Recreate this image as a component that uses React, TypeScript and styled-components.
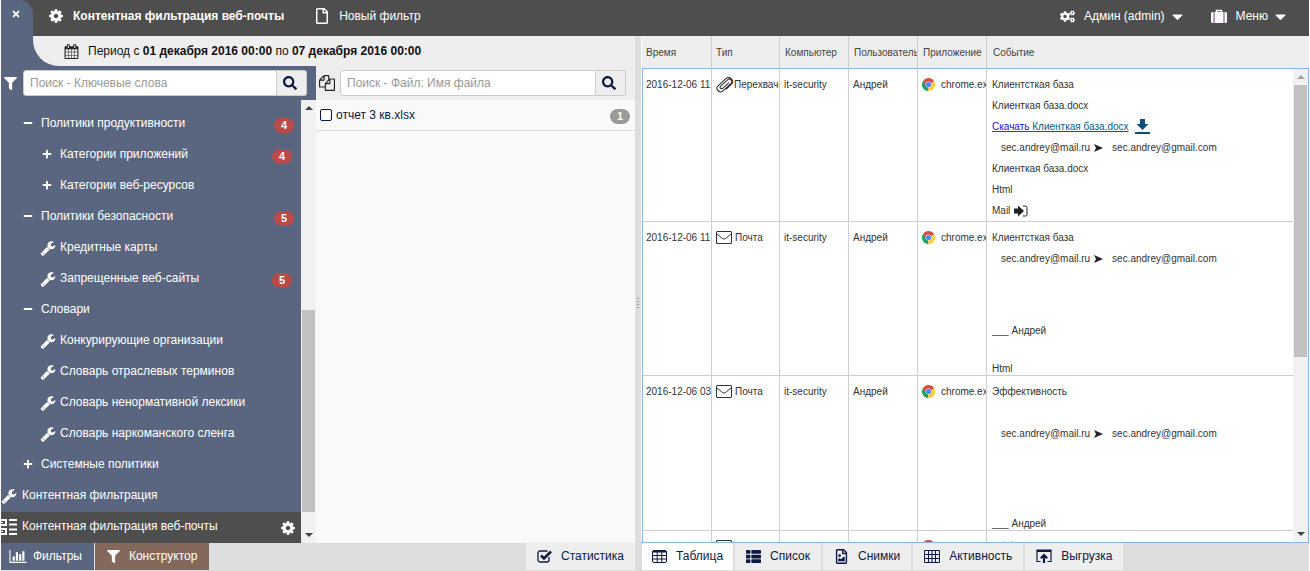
import React from "react";
import styled, { createGlobalStyle, css } from "styled-components";
import {
  FaCaretDown,
  FaCogs,
  FaFilter,
  FaMinus,
  FaPlus,
  FaRegFile,
  FaRegFileImage,
  FaSearch,
  FaThList,
  FaTimes,
} from "react-icons/fa";

const c = {
  slate: "#5a6680",
  dark: "#4e4e4e",
  panel: "#eeeeee",
  bar: "#dddddd",
  line: "#cfcfcf",
  frame: "#8db2ee",
  navy: "#0c1a45",
  ink: "#333333",
  red: "#b94a48",
};

const GlobalStyle = createGlobalStyle`
  * { box-sizing: border-box; }
  body {
    margin: 0;
    background: #fff;
    font-family: "Liberation Sans", Arial, sans-serif;
    font-size: 12px;
    color: #111;
  }
  button, input { font: inherit; color: inherit; }
  svg { display: block; flex: none; }
`;

const Page = styled.div`
  display: flex;
  flex-direction: column;
  height: 100vh;
  padding: 0 1px;
  overflow: hidden;
`;

/* ---------- top bar ---------- */

const TopBar = styled.header`
  flex: none;
  display: flex;
  align-items: center;
  height: 36px;
  background: ${c.dark};
  color: #fff;
`;

const PlainButton = styled.button`
  display: flex;
  align-items: center;
  padding: 0;
  border: 0;
  background: none;
  cursor: pointer;
  white-space: nowrap;
`;

const CloseButton = styled(PlainButton)`
  align-self: stretch;
  justify-content: center;
  width: 32px;
  padding: 0 2px 8px 0;
  margin-right: 15px;
  background: ${c.slate};
  border-radius: 0 14px 0 0;
`;

const TopButton = styled(PlainButton)<{ $strong?: boolean }>`
  gap: 9px;
  padding-bottom: 4px;
  font-weight: ${(p) => (p.$strong ? "bold" : "normal")};
`;

const TopStart = styled.nav`
  display: flex;
  gap: 30px;
  flex: 1;
`;

const TopEnd = styled.nav`
  display: flex;
  gap: 25px;
  padding-right: 20px;
`;

const MenuLabel = styled.span`
  display: flex;
  align-items: center;
  gap: 4px;
`;

/* ---------- page columns ---------- */

const columns = css`
  display: grid;
  grid-template-columns: minmax(0, 634fr) 6px minmax(0, 668fr);
`;

const Main = styled.main`
  ${columns}
  flex: 1;
  min-height: 0;
`;

const Left = styled.div`
  display: flex;
  flex-direction: column;
  min-height: 0;
`;

const PeriodWrap = styled.div`
  flex: none;
  padding-left: 32px;
  background: linear-gradient(to right, ${c.slate} 315px, ${c.panel} 315px);
`;

const Period = styled.div`
  display: flex;
  align-items: center;
  gap: 9px;
  height: 30px;
  padding-left: 31px;
  background: ${c.panel};
  border-radius: 0 0 0 26px;
  white-space: nowrap;
`;

const LeftBody = styled.div`
  flex: 1;
  display: flex;
  min-height: 0;
`;

const Sidebar = styled.aside`
  flex: none;
  display: flex;
  flex-direction: column;
  width: 315px;
  background: ${c.slate};
  color: #fff;
`;

const Files = styled.section`
  flex: 1;
  min-width: 0;
  display: flex;
  flex-direction: column;
  background: #f9f9f9;
`;

const SearchRow = styled.form<{ $light?: boolean }>`
  flex: none;
  display: flex;
  align-items: center;
  height: 34px;
  padding: 0 9px 0 3px;
  gap: ${(p) => (p.$light ? 5 : 6)}px;
  background: ${(p) => (p.$light ? c.panel : c.slate)};
  color: ${(p) => (p.$light ? "#222" : "#fff")};
`;

const SearchInput = styled.input`
  flex: 1;
  min-width: 0;
  height: 26px;
  padding: 0 6px;
  border: 1px solid #ccc;
  border-radius: 3px 0 0 3px;
  background: #fff;
  color: #222;
  outline: 0;
  &::placeholder { color: #999; opacity: 1; }
`;

const SearchButton = styled(PlainButton)`
  justify-content: center;
  width: 30px;
  height: 26px;
  padding-right: 4px;
  border: 1px solid #ccc;
  border-left: 0;
  border-radius: 0 3px 3px 0;
  background: ${c.panel};
  color: ${c.navy};
`;

const InputGroup = styled.div`
  flex: 1;
  min-width: 0;
  display: flex;
`;

/* ---------- tree ---------- */

const TreeArea = styled.div`
  flex: 1;
  display: flex;
  min-height: 0;
`;

const Tree = styled.ul`
  flex: 1;
  min-width: 0;
  margin: 0;
  padding: 9px 0 0;
  list-style: none;
  overflow: hidden;
`;

const TreeRow = styled.li<{ $level: number; $active?: boolean }>`
  display: flex;
  align-items: center;
  height: 31px;
  padding: 0 ${(p) => [5, 7, 9][p.$level]}px 4px ${(p) => [0, 20, 39][p.$level]}px;
  background: ${(p) => (p.$active ? c.dark : "none")};
`;

const TreeIcon = styled.span<{ $level: number }>`
  flex: none;
  display: flex;
  width: ${(p) => (p.$level === 0 ? 21 : 20)}px;
`;

const TreeLabel = styled.span`
  flex: 1;
  white-space: nowrap;
`;

const Count = styled.span<{ $grey?: boolean }>`
  flex: none;
  min-width: 20px;
  padding: 0 7px;
  border-radius: 8px;
  background: ${(p) => (p.$grey ? "#999" : c.red)};
  color: #fff;
  font-size: 11px;
  font-weight: bold;
  line-height: 15px;
  text-align: center;
  margin-top: ${(p) => (p.$grey ? 2 : 5)}px;
`;

const RowAction = styled.span`
  margin-top: 5px;
`;

/* ---------- scroll rail ---------- */

const RailBox = styled.div`
  flex: none;
  display: flex;
  flex-direction: column;
  align-items: center;
  width: 15px;
  background: #f1f1f1;
`;

const RailArrow = styled.span<{ $down?: boolean; $muted?: boolean }>`
  flex: none;
  display: flex;
  align-items: center;
  justify-content: center;
  width: 14px;
  height: 16px;
  color: ${(p) => (p.$muted ? "#a3a3a3" : "#444")};
  transform: ${(p) => (p.$down ? "rotate(180deg)" : "none")};
`;

const RailSpace = styled.span<{ $grow: number }>`
  flex: ${(p) => p.$grow} 0 0;
`;

const RailThumb = styled.span<{ $grow: number }>`
  flex: ${(p) => p.$grow} 0 0;
  width: 13px;
  background: #c1c1c1;
`;

function Rail({ before, thumb, after, muted }: { before: number; thumb: number; after: number; muted?: boolean }) {
  const arrow = (
    <svg width="8" height="4" viewBox="0 0 8 4" fill="currentColor"><path d="M0 4L4 0l4 4z" /></svg>
  );
  return (
    <RailBox aria-hidden="true">
      <RailArrow $muted={muted}>{arrow}</RailArrow>
      <RailSpace $grow={before} />
      <RailThumb $grow={thumb} />
      <RailSpace $grow={after} />
      <RailArrow $down>{arrow}</RailArrow>
    </RailBox>
  );
}

/* ---------- file list ---------- */

const FileRow = styled.div`
  display: flex;
  align-items: center;
  height: 31px;
  padding: 0 5px 0 4px;
  border-bottom: 1px solid #ddd;
`;

const FileLabel = styled.label`
  flex: 1;
  display: flex;
  align-items: center;
  gap: 4px;
  color: ${c.navy};
`;

const Check = styled.input`
  appearance: none;
  width: 12px;
  height: 12px;
  margin: 0;
  border: 1px solid ${c.navy};
  border-radius: 2px;
  background: #fff;
`;

const Splitter = styled.div`
  display: flex;
  align-items: center;
  justify-content: center;
  padding-top: 28px;
  background: ${c.bar};
  &::before {
    content: "";
    width: 2px;
    height: 12px;
    background: repeating-linear-gradient(#999 0 1px, transparent 1px 3px);
  }
`;

/* ---------- event table ---------- */

const Events = styled.section`
  display: flex;
  min-height: 0;
  padding-left: 1px;
  border-bottom: 1px solid ${c.frame};
`;

const TableView = styled.div`
  flex: 1;
  min-width: 0;
  overflow: hidden;
`;

const Table = styled.table`
  width: 100%;
  table-layout: fixed;
  border-collapse: separate;
  border-spacing: 0;
  font-size: 10px;
  color: ${c.ink};
`;

const Th = styled.th`
  height: 33px;
  padding: 0 0 0 4px;
  overflow: hidden;
  border-right: 1px solid ${c.line};
  border-bottom: 1px solid ${c.frame};
  background: ${c.panel};
  color: #444;
  font-weight: normal;
  text-align: left;
  white-space: nowrap;
  &:nth-child(n + 3) { padding-left: 5px; }
  &:last-child { border-right: 0; padding-left: 6px; }
`;

const Td = styled.td`
  padding: 5px 0 0 4px;
  overflow: hidden;
  border-right: 1px solid ${c.line};
  border-bottom: 1px solid ${c.line};
  vertical-align: top;
  white-space: nowrap;
  &:first-child { border-left: 1px solid ${c.frame}; padding-left: 3px; }
  &:last-child { border-right: 0; padding-left: 5px; }
`;

const CellLine = styled.div<{ $gap?: number }>`
  display: flex;
  align-items: center;
  gap: ${(p) => p.$gap ?? 0}px;
  height: 21px;
  overflow: hidden;
`;

const EventLine = styled.div<{ $before?: number; $tight?: boolean; $indent?: boolean }>`
  display: flex;
  align-items: center;
  gap: 4px;
  height: ${(p) => (p.$tight ? 14 : 21)}px;
  margin-top: ${(p) => p.$before ?? 0}px;
  padding-left: ${(p) => (p.$indent ? 9 : 0)}px;
`;

const Recipient = styled.span`
  margin-left: 5px;
`;

const Download = styled.a`
  display: flex;
  align-items: center;
  gap: 6px;
  color: #0b5a82;
  text-decoration: underline;
`;

const DownloadVerb = styled.span`
  color: #1414e6;
`;

const RailColumn = styled.div`
  flex: none;
  display: flex;
  flex-direction: column;
  width: 16px;
`;

const RailHead = styled.div`
  flex: none;
  height: 33px;
  background: ${c.panel};
  border-bottom: 1px solid ${c.frame};
`;

const RailFrame = styled.div`
  flex: 1;
  display: flex;
  border-right: 1px solid ${c.frame};
`;

/* ---------- bottom bar ---------- */

const BottomBar = styled.footer`
  ${columns}
  flex: none;
  height: 28px;
  background: ${c.bar};
`;

const TabStrip = styled.nav<{ $gap: number }>`
  display: flex;
  gap: ${(p) => p.$gap}px;
  padding-bottom: 1px;
`;

const RightTabs = styled(TabStrip)`
  grid-column: 3;
  padding-left: 1px;
`;

const TabSpacer = styled.span`
  flex: 1;
`;

const tabLook = {
  light: css`padding: 0 11px 1px; background: ${c.panel}; color: ${c.navy};`,
  current: css`padding: 0 10px 1px; background: #fff; color: ${c.navy};`,
  slate: css`gap: 6px; padding: 0 12px 1px 8px; background: ${c.slate}; color: #fff;`,
  brown: css`padding: 0 12px 1px; background: #84685c; color: #fff;`,
};

const Tab = styled(PlainButton)<{ $look: keyof typeof tabLook }>`
  gap: 9px;
  ${(p) => tabLook[p.$look]}
`;

/* ---------- drawings ---------- */

const GearIcon = () => (
  <svg width="16" height="16" viewBox="0 0 1792 1792" fill="#fff">
    <path d="M1152 896q0-106-75-181t-181-75-181 75-75 181 75 181 181 75 181-75 75-181zm512-109v222q0 12-8 23t-20 13l-185 28q-19 54-39 91 35 50 107 138 10 12 10 25t-9 23q-27 37-99 108t-94 71q-12 0-26-9l-138-108q-44 23-91 38-16 136-29 186-7 28-36 28h-222q-14 0-24.5-8.5t-11.5-21.5l-28-184q-49-16-90-37l-141 107q-10 9-25 9-14 0-25-11-126-114-165-168-7-10-7-23 0-12 8-23 15-21 51-66.5t54-70.5q-27-50-41-99l-183-27q-13-2-21-12.5t-8-23.5v-222q0-12 8-23t19-13l186-28q14-46 39-92-40-57-107-138-10-12-10-24 0-10 9-23 26-36 98.5-107.5t94.5-71.5q13 0 26 10l138 107q44-23 91-38 16-136 29-186 7-28 36-28h222q14 0 24.5 8.5t11.5 21.5l28 184q49 16 90 37l142-107q9-9 24-9 13 0 25 10 129 119 165 170 7 8 7 22 0 12-8 23-15 21-51 66.5t-54 70.5q26 50 41 98l183 28q13 2 21 12.5t8 23.5z" />
  </svg>
);

const WrenchIcon = () => (
  <svg width="16" height="16" viewBox="0 0 1792 1792" fill="#fff">
    <path d="M448 1472q0-26-19-45t-45-19-45 19-19 45 19 45 45 19 45-19 19-45zm644-420l-682 682q-37 37-90 37-52 0-91-37l-106-108q-38-36-38-90 0-53 38-91l681-681q39 98 114.5 173.5t173.5 114.5zm634-435q0 39-23 106-47 134-164.5 217.5t-258.5 83.5q-185 0-316.5-131.5t-131.5-316.5 131.5-316.5 316.5-131.5q58 0 121.5 16.5t107.5 46.5q16 11 16 28t-16 28l-293 169v224l193 107q5-3 79-48.5t135.5-81 70.5-35.5q15 0 23.5 10t8.5 25z" />
  </svg>
);

const CalendarIcon = () => (
  <svg width="15" height="15" viewBox="0 0 1792 1792" fill="#222">
    <path d="M192 1664h288v-288h-288v288zm352 0h320v-288h-320v288zm-352-352h288v-320h-288v320zm352 0h320v-320h-320v320zm-352-384h288v-288h-288v288zm736 736h320v-288h-320v288zm-384-736h320v-288h-320v288zm768 736h288v-288h-288v288zm-384-352h320v-320h-320v320zm-352-864v-288q0-13-9.5-22.5t-22.5-9.5h-64q-13 0-22.5 9.5t-9.5 22.5v288q0 13 9.5 22.5t22.5 9.5h64q13 0 22.5-9.5t9.5-22.5zm736 864h288v-320h-288v320zm-384-384h320v-288h-320v288zm384 0h288v-288h-288v288zm32-480v-288q0-13-9.5-22.5t-22.5-9.5h-64q-13 0-22.5 9.5t-9.5 22.5v288q0 13 9.5 22.5t22.5 9.5h64q13 0 22.5-9.5t9.5-22.5zm384-64v1280q0 52-38 90t-90 38h-1408q-52 0-90-38t-38-90v-1280q0-52 38-90t90-38h128v-96q0-66 47-113t113-47h64q66 0 113 47t47 113v96h384v-96q0-66 47-113t113-47h64q66 0 113 47t47 113v96h128q52 0 90 38t38 90z" />
  </svg>
);

const CopyIcon = () => (
  <svg width="16" height="16" viewBox="0 0 1792 1792" fill="#222">
    <path d="M1696 384q40 0 68 28t28 68v1216q0 40-28 68t-68 28h-960q-40 0-68-28t-28-68v-288h-544q-40 0-68-28t-28-68v-672q0-40 20-88t48-76l408-408q28-28 76-48t88-20h416q40 0 68 28t28 68v328q68-40 128-40h416zm-544 213l-299 299h299v-299zm-640-384l-299 299h299v-299zm196 647l316-316v-416h-384v416q0 40-28 68t-68 28h-416v640h512v-256q0-40 20-88t48-76zm956 804v-1152h-384v416q0 40-28 68t-68 28h-416v640h896z" />
  </svg>
);

const ChartIcon = () => (
  <svg width="18" height="15" viewBox="0 0 2048 1792" fill="currentColor">
    <path d="M640 896v512h-256v-512h256zm384-512v1024h-256v-1024h256zm1024 1152v128h-2048v-1536h128v1408h1920zm-640-896v768h-256v-768h256zm384-384v1152h-256v-1152h256z" />
  </svg>
);

const SuitcaseIcon = () => (
  <svg width="16" height="15" viewBox="0 0 16 15">
    <path d="M5.5 3V1.5h5V3" fill="none" stroke="#fff" strokeWidth="1.5" />
    <rect y="3" width="16" height="11" rx="1.5" fill="#fff" />
    <path d="M3 3v11M13 3v11" stroke="#8b5f96" strokeWidth="1.2" />
  </svg>
);

const ViewIcon = () => (
  <svg width="16" height="16" viewBox="0 0 16 16">
    <path d="M0 1h5v5H0M0 10h5v5H0" fill="none" stroke="#fff" strokeWidth="2" />
    <path d="M0 3.5h2M0 12.5h2" stroke="#fff" />
    <path d="M8 1h8M8 5.5h8M8 10.5h8M8 15h8" stroke="#fff" strokeWidth="2" />
  </svg>
);

const CheckSquareIcon = () => (
  <svg width="15" height="14" viewBox="0 0 15 14" fill="none" stroke="currentColor">
    <path d="M12 8v3a2 2 0 0 1-2 2H3a2 2 0 0 1-2-2V4a2 2 0 0 1 2-2h7.5" strokeWidth="1.3" />
    <path d="M4 6.5L7 9.5 14 2.5" strokeWidth="2.6" />
  </svg>
);

const TableIcon = () => (
  <svg width="15" height="13" viewBox="0 0 15 13" fill="none" stroke="currentColor">
    <rect x=".5" y=".5" width="14" height="12" rx="1.5" />
    <path d="M1 1.5h13" strokeWidth="2" />
    <path d="M0 5.5h15M0 9h15M5.2 2v10.5M9.8 2v10.5" />
  </svg>
);

const GridIcon = () => (
  <svg width="16" height="13" viewBox="0 0 16 13" fill="none" stroke="currentColor">
    <path d="M.5.5h15v12H.5zM0 4.5h16M0 8.5h16M4.500 0v13M8 0v13M11.500 0v13" />
  </svg>
);

const ExportIcon = () => (
  <svg width="16" height="14" viewBox="0 0 16 14" fill="none" stroke="currentColor">
    <path d="M4.5 12.5H1V1h14v11.5h-3.5" strokeWidth="1.2" />
    <path d="M1 2h14" strokeWidth="2" />
    <path d="M8 14V7M4.8 9.2L8 6l3.2 3.2" strokeWidth="2.2" />
  </svg>
);

const ClipIcon = () => (
  <svg width="18" height="18" viewBox="0 0 18 18" fill="none" stroke="#333" strokeWidth="1.1">
    <path d="M12.9 6.6L6.7 12.3a1.5 1.5 0 0 1-2.1-2.2l6.9-6.3a2.5 2.5 0 0 1 3.5 3.6l-8 7.4a3.5 3.5 0 0 1-4.9-5l7.7-7.1a4 4 0 0 1 5.600.1 4 4 0 0 1 .1 5.300l-5.500 5.300" />
  </svg>
);

const MailIcon = () => (
  <svg width="16" height="13" viewBox="0 0 16 13" fill="none" stroke="#333">
    <rect x=".5" y=".5" width="15" height="12" rx=".5" />
    <path d="M1 3l5.5 4.6q1.5 1 3 0L15 3" />
  </svg>
);

const ChromeIcon = () => (
  <svg width="13" height="13" viewBox="0 0 26 26">
    <path d="M13 13L1.7 6.5A13 13 0 0 1 24.3 6.5z" fill="#dd4b3e" />
    <path d="M13 13L1.7 6.5A13 13 0 0 0 13 26z" fill="#1da362" />
    <path d="M13 13L24.3 6.5A13 13 0 0 1 13 26z" fill="#fdcd3f" />
    <path d="M13 13V6.5h11.3zM7.4 16.3L1.7 6.5 10 11z" fill="#dd4b3e" />
    <path d="M18.6 16.3L13 26l-1-8z" fill="#fdcd3f" />
    <circle cx="13" cy="13" r="6" fill="#e8effc" />
    <circle cx="13" cy="13" r="5.2" fill="#4a8af4" />
  </svg>
);

const DownloadIcon = () => (
  <svg width="15" height="15" viewBox="0 0 15 15" fill="#0b4f78">
    <path d="M5 0h5v5h3.5l-6 6-6-6H5zM0 13h15v2H0z" />
  </svg>
);

const SignInIcon = () => (
  <svg width="14" height="12" viewBox="0 0 14 12">
    <path d="M0 3.5h4v-3L10 6l-6 5.5v-3H0z" fill="#222" />
    <path d="M9 1h2.5a1.5 1.5 0 0 1 1.5 1.5v7a1.5 1.5 0 0 1-1.5 1.5H9" fill="none" stroke="#222" />
  </svg>
);

const ArrowIcon = () => (
  <svg width="9" height="8" viewBox="0 0 9 8" fill="#222">
    <path d="M0 0l9 4-9 4 2-4z" />
  </svg>
);

/* ---------- data ---------- */

type Node = { label: string; level: number; kind: "plus" | "minus" | "wrench" | "view"; count?: number };

const nodes: Node[] = [
  { label: "Политики продуктивности", level: 1, kind: "minus", count: 4 },
  { label: "Категории приложений", level: 2, kind: "plus", count: 4 },
  { label: "Категории веб-ресурсов", level: 2, kind: "plus" },
  { label: "Политики безопасности", level: 1, kind: "minus", count: 5 },
  { label: "Кредитные карты", level: 2, kind: "wrench" },
  { label: "Запрещенные веб-сайты", level: 2, kind: "wrench", count: 5 },
  { label: "Словари", level: 1, kind: "minus" },
  { label: "Конкурирующие организации", level: 2, kind: "wrench" },
  { label: "Словарь отраслевых терминов", level: 2, kind: "wrench" },
  { label: "Словарь ненормативной лексики", level: 2, kind: "wrench" },
  { label: "Словарь наркоманского сленга", level: 2, kind: "wrench" },
  { label: "Системные политики", level: 1, kind: "plus" },
  { label: "Контентная фильтрация", level: 0, kind: "wrench" },
  { label: "Контентная фильтрация веб-почты", level: 0, kind: "view" },
];

const SignIcon = styled.span`
  display: flex;
  padding: 1px 0 0 2px;
`;

const WrenchBox = styled.span`
  padding-top: 3px;
`;

const nodeIcon = {
  plus: <SignIcon><FaPlus size={10} /></SignIcon>,
  minus: <SignIcon><FaMinus size={10} /></SignIcon>,
  wrench: <WrenchBox><WrenchIcon /></WrenchBox>,
  view: <WrenchBox><ViewIcon /></WrenchBox>,
};

const Route = ({ before }: { before?: number }) => (
  <EventLine $indent $before={before}>
    sec.andrey@mail.ru <ArrowIcon /> <Recipient>sec.andrey@gmail.com</Recipient>
  </EventLine>
);

const events = [
  {
    time: "2016-12-06 11:48",
    clip: true,
    body: (
      <>
        <EventLine>Клиентсткая база</EventLine>
        <EventLine>Клиенткая база.docx</EventLine>
        <EventLine>
          <Download href="#download">
            <span><DownloadVerb>Скачать </DownloadVerb>Клиенткая база.docx</span>
            <DownloadIcon />
          </Download>
        </EventLine>
        <Route />
        <EventLine>Клиенткая база.docx</EventLine>
        <EventLine>Html</EventLine>
        <EventLine>Mail <SignInIcon /></EventLine>
      </>
    ),
  },
  {
    time: "2016-12-06 11:46",
    body: (
      <>
        <EventLine>Клиентсткая база</EventLine>
        <Route />
        <EventLine $before={51}>___ Андрей</EventLine>
        <EventLine $before={20} $tight>Html</EventLine>
      </>
    ),
  },
  {
    time: "2016-12-06 03:12",
    body: (
      <>
        <EventLine>Эффективность</EventLine>
        <Route before={21} />
        <EventLine $before={72} $tight>___ Андрей</EventLine>
      </>
    ),
  },
  { time: "2016-12-06 03:10", body: <EventLine>Эффективность</EventLine> },
];

export default function App() {
  return (
    <Page>
      <GlobalStyle />
      <TopBar>
        <CloseButton type="button" aria-label="Закрыть"><FaTimes size={10} /></CloseButton>
        <TopStart>
          <TopButton type="button" $strong><GearIcon />Контентная фильтрация веб-почты</TopButton>
          <TopButton type="button"><FaRegFile size={16} />Новый фильтр</TopButton>
        </TopStart>
        <TopEnd>
          <TopButton type="button">
            <FaCogs size={15} />
            <MenuLabel>Админ (admin)<FaCaretDown size={17} /></MenuLabel>
          </TopButton>
          <TopButton type="button">
            <SuitcaseIcon />
            <MenuLabel>Меню<FaCaretDown size={17} /></MenuLabel>
          </TopButton>
        </TopEnd>
      </TopBar>

      <Main>
        <Left>
          <PeriodWrap>
            <Period>
              <CalendarIcon />
              <span>Период с <b>01 декабря 2016 00:00</b> по <b>07 декабря 2016 00:00</b></span>
            </Period>
          </PeriodWrap>
          <LeftBody>
            <Sidebar>
              <SearchRow onSubmit={(e) => e.preventDefault()}>
                <FaFilter size={13} />
                <InputGroup>
                  <SearchInput aria-label="Ключевые слова" placeholder="Поиск - Ключевые слова" />
                  <SearchButton type="submit" aria-label="Найти"><FaSearch size={14} /></SearchButton>
                </InputGroup>
              </SearchRow>
              <TreeArea>
                <Tree>
                  {nodes.map((n) => (
                    <TreeRow key={n.label} $level={n.level} $active={n.kind === "view"}>
                      <TreeIcon $level={n.level}>{nodeIcon[n.kind]}</TreeIcon>
                      <TreeLabel>{n.label}</TreeLabel>
                      {n.count && <Count>{n.count}</Count>}
                      {n.kind === "view" && <RowAction><GearIcon /></RowAction>}
                    </TreeRow>
                  ))}
                </Tree>
                <Rail before={194} thumb={202} after={15} />
              </TreeArea>
            </Sidebar>
            <Files>
              <SearchRow $light onSubmit={(e) => e.preventDefault()}>
                <CopyIcon />
                <InputGroup>
                  <SearchInput aria-label="Имя файла" placeholder="Поиск - Файл: Имя файла" />
                  <SearchButton type="submit" aria-label="Найти"><FaSearch size={14} /></SearchButton>
                </InputGroup>
              </SearchRow>
              <FileRow>
                <FileLabel><Check type="checkbox" />отчет 3 кв.xlsx</FileLabel>
                <Count $grey>1</Count>
              </FileRow>
            </Files>
          </LeftBody>
        </Left>

        <Splitter />

        <Events>
          <TableView>
            <Table>
              <colgroup>
                <col width="70" />
                <col width="68" />
                <col width="69" />
                <col width="69" />
                <col width="69" />
                <col />
              </colgroup>
              <thead>
                <tr>
                  <Th>Время</Th>
                  <Th>Тип</Th>
                  <Th>Компьютер</Th>
                  <Th>Пользователь</Th>
                  <Th>Приложение</Th>
                  <Th>Событие</Th>
                </tr>
              </thead>
              <tbody>
                {events.map((e) => (
                  <tr key={e.time}>
                    <Td><CellLine>{e.time}</CellLine></Td>
                    <Td>
                      {e.clip
                        ? <CellLine><ClipIcon />Перехвачен</CellLine>
                        : <CellLine $gap={3}><MailIcon />Почта</CellLine>}
                    </Td>
                    <Td><CellLine>it-security</CellLine></Td>
                    <Td><CellLine>Андрей</CellLine></Td>
                    <Td><CellLine $gap={6}><ChromeIcon />chrome.exe</CellLine></Td>
                    <Td>{e.body}</Td>
                  </tr>
                ))}
              </tbody>
            </Table>
          </TableView>
          <RailColumn>
            <RailHead />
            <RailFrame><Rail before={0} thumb={273} after={170} muted /></RailFrame>
          </RailColumn>
        </Events>
      </Main>

      <BottomBar>
        <TabStrip $gap={1}>
          <Tab type="button" $look="slate"><ChartIcon />Фильтры</Tab>
          <Tab type="button" $look="brown"><FaFilter size={13} />Конструктор</Tab>
          <TabSpacer />
          <Tab type="button" $look="light"><CheckSquareIcon />Статистика</Tab>
        </TabStrip>
        <RightTabs $gap={2}>
          <Tab type="button" $look="current"><TableIcon />Таблица</Tab>
          <Tab type="button" $look="light"><FaThList size={15} />Список</Tab>
          <Tab type="button" $look="light"><FaRegFileImage size={15} />Снимки</Tab>
          <Tab type="button" $look="light"><GridIcon />Активность</Tab>
          <Tab type="button" $look="light"><ExportIcon />Выгрузка</Tab>
        </RightTabs>
      </BottomBar>
    </Page>
  );
}
